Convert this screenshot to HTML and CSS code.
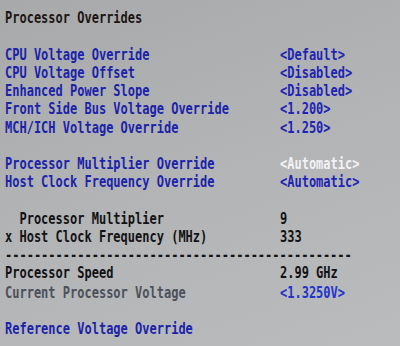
FILE: index.html
```html
<!DOCTYPE html>
<html lang="en">
<head>
    <meta charset="UTF-8">
    <meta name="viewport" content="width=device-width, initial-scale=1.0">
    <title>Processor Overrides</title>
    <link rel="stylesheet" href="styles.css">
</head>
<body>
    <div class="screen">
        <div class="row title">Processor Overrides</div>
        <div class="row blank"></div>
        <div class="row option"><span class="label">CPU Voltage Override</span><span class="value">&lt;Default&gt;</span></div>
        <div class="row option"><span class="label">CPU Voltage Offset</span><span class="value">&lt;Disabled&gt;</span></div>
        <div class="row option"><span class="label">Enhanced Power Slope</span><span class="value">&lt;Disabled&gt;</span></div>
        <div class="row option"><span class="label">Front Side Bus Voltage Override</span><span class="value">&lt;1.200&gt;</span></div>
        <div class="row option"><span class="label">MCH/ICH Voltage Override</span><span class="value">&lt;1.250&gt;</span></div>
        <div class="row blank"></div>
        <div class="row option"><span class="label">Processor Multiplier Override</span><span class="value selected">&lt;Automatic&gt;</span></div>
        <div class="row option"><span class="label">Host Clock Frequency Override</span><span class="value">&lt;Automatic&gt;</span></div>
        <div class="row blank"></div>
        <div class="row info"><span class="label">  Processor Multiplier</span><span class="value">9</span></div>
        <div class="row info"><span class="label">x Host Clock Frequency (MHz)</span><span class="value">333</span></div>
        <div class="row info">------------------------------------------------</div>
        <div class="row info"><span class="label">Processor Speed</span><span class="value">2.99 GHz</span></div>
        <div class="row muted"><span class="label">Current Processor Voltage</span><span class="value live">&lt;1.3250V&gt;</span></div>
        <div class="row blank"></div>
        <div class="row option"><span class="label">Reference Voltage Override</span></div>
    </div>
</body>
</html>
```

FILE: styles.css
```css
body {
    margin: 0;
    padding: 0;
    width: 400px;
    height: 346px;
    overflow: hidden;
    background: linear-gradient(160deg, #a8a9ab 0%, #b2b4b6 50%, #b9bbbc 100%);
}
.screen {
    font-family: "DejaVu Sans Mono", monospace;
    font-size: 12px;
    font-weight: bold;
    line-height: 14.05px;
    padding: 6.8px 0 0 5px;
    transform: scaleY(1.3);
    transform-origin: top left;
}
.row {
    display: flex;
    height: 14.05px;
    white-space: pre;
}
.label {
    width: 275px;
    flex-shrink: 0;
}
.title {
    color: #1c1612;
}
.option {
    color: #1b22aa;
}
.option .value {
    color: #1e24b4;
}
.value.selected {
    color: #f2f2f4;
}
.info {
    color: #121214;
}
.muted {
    color: #4c505a;
}
.value.live {
    color: #2234cc;
}
```
